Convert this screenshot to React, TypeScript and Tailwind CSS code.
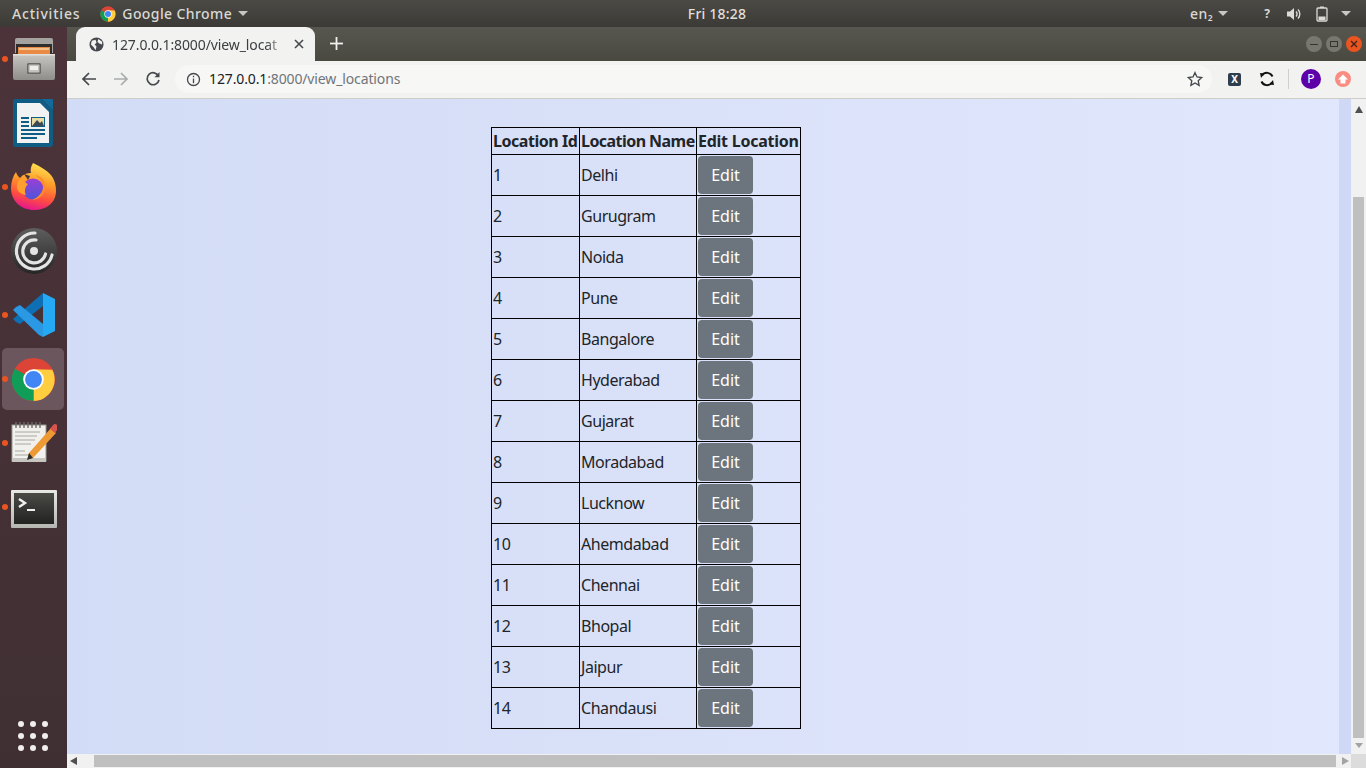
import React from "react";

const locations = [
  "Delhi",
  "Gurugram",
  "Noida",
  "Pune",
  "Bangalore",
  "Hyderabad",
  "Gujarat",
  "Moradabad",
  "Lucknow",
  "Ahemdabad",
  "Chennai",
  "Bhopal",
  "Jaipur",
  "Chandausi",
];

function ChromeLogo({ size }: { size: number }) {
  return (
    <svg width={size} height={size} viewBox="0 0 48 48">
      <circle cx="24" cy="24" r="23" fill="#DB4437" />
      <path d="M24 24 L44 13.5 A23 23 0 0 1 24 47 Z" fill="#FFCD40" />
      <path d="M24 24 L24 47 A23 23 0 0 1 4 12.5 Z" fill="#0F9D58" />
      <path d="M4 12.5 L14 29.5 L24 24 Z" fill="#0F9D58" />
      <path d="M24 13 L44 13.5 L33.5 30 L24 24 Z" fill="#FFCD40" />
      <circle cx="24" cy="24" r="11" fill="#fff" />
      <circle cx="24" cy="24" r="9" fill="#4285F4" />
    </svg>
  );
}

function FilesIcon() {
  return (
    <svg width="44" height="44" viewBox="0 0 44 44">
      <defs>
        <linearGradient id="drawer" x1="0" y1="0" x2="0" y2="1">
          <stop offset="0" stopColor="#c9c7c4" />
          <stop offset="1" stopColor="#8f8d8a" />
        </linearGradient>
      </defs>
      <path d="M3 3 a2 2 0 0 1 2 -2 H39 a2 2 0 0 1 2 2 V16 H3 Z" fill="#a5a3a0" />
      <rect x="4" y="7" width="36" height="12" fill="#2f2e2c" />
      <rect x="6" y="10" width="32" height="8" fill="#e98a45" />
      <rect x="7" y="11" width="30" height="2" fill="#f4c08c" />
      <path d="M1 17 H43 V41 a2 2 0 0 1 -2 2 H3 a2 2 0 0 1 -2 -2 Z" fill="url(#drawer)" />
      <rect x="1" y="17" width="42" height="1.5" fill="#e2e0dd" />
      <rect x="15" y="26" width="14" height="11" rx="1.5" fill="#6b6966" />
      <rect x="16.5" y="27.5" width="11" height="8" rx="1" fill="#c4c2bf" />
      <rect x="18" y="29" width="8" height="4" fill="#efeeec" />
    </svg>
  );
}

function WriterIcon() {
  return (
    <svg width="42" height="48" viewBox="0 0 42 48">
      <path d="M2 0 H29 L40 11 V45 a3 3 0 0 1 -3 3 H3 a3 3 0 0 1 -3 -3 V2 a2 2 0 0 1 2 -2 Z" fill="#0f5c85" />
      <path d="M4 4 H27 L36 13 V44 H4 Z" fill="#f1f3f3" />
      <path d="M29 0 H39 a1 1 0 0 1 1 1 V11 Z" fill="#106a9a" />
      <rect x="8" y="18" width="8" height="2" fill="#0f5c85" />
      <rect x="8" y="22" width="8" height="2" fill="#0f5c85" />
      <rect x="8" y="26" width="8" height="2" fill="#0f5c85" />
      <rect x="8" y="30" width="24" height="2" fill="#0f5c85" />
      <rect x="8" y="34" width="24" height="2" fill="#0f5c85" />
      <rect x="8" y="38" width="16" height="2" fill="#0f5c85" />
      <rect x="18" y="18" width="14" height="10" fill="#0f5c85" />
      <rect x="19" y="19" width="12" height="8" fill="#e9dca0" />
      <path d="M19 27 L24 21 L27 24 L29 22 L31 27 Z" fill="#3e4a52" />
    </svg>
  );
}

function FirefoxIcon() {
  return (
    <svg className="mt-[-2px]" width="46" height="47" viewBox="0 0 46 47">
      <defs>
        <linearGradient id="ffa" x1="0.65" y1="0" x2="0.4" y2="1">
          <stop offset="0" stopColor="#ffe552" />
          <stop offset="0.4" stopColor="#ff9a2a" />
          <stop offset="0.72" stopColor="#ff4f3f" />
          <stop offset="1" stopColor="#e5158f" />
        </linearGradient>
        <linearGradient id="ffb" x1="0.5" y1="0" x2="0.5" y2="1">
          <stop offset="0" stopColor="#9b3fd6" />
          <stop offset="1" stopColor="#4d55d8" />
        </linearGradient>
      </defs>
      <path
        d="M22 0 C30 4 38 8 42 15 C45 21 45 26 45 28 C45 40 35 47 23 47 C10 47 0 38 0 25 C0 19 2 13 5 9 C6 12 7 13 9 15 C12 11 17 10 20 10 C19 7 20 3 22 0 Z"
        fill="url(#ffa)"
      />
      <circle cx="22" cy="26" r="10.5" fill="url(#ffb)" />
      <path d="M13 11 L19 13 L17 17 Z" fill="#47323a" />
      <path d="M6 24 C6 17 11 14 16 15 C13 18 14 20 17 21 C14 24 13 28 15 32 C9 31 6 28 6 24 Z" fill="#ffa02e" />
      <path d="M24 12 C31 13 35 19 34 26 C33 33 27 37 21 37 C28 34 32 29 32 24 C32 19 29 15 24 12 Z" fill="#ff8a2c" />
    </svg>
  );
}

function DiscIcon() {
  return (
    <svg width="46" height="46" viewBox="0 0 46 46">
      <defs>
        <linearGradient id="dsc" x1="0" y1="0" x2="0" y2="1">
          <stop offset="0" stopColor="#5e5e5e" />
          <stop offset="1" stopColor="#262626" />
        </linearGradient>
      </defs>
      <circle cx="23" cy="23" r="23" fill="url(#dsc)" />
      <g fill="none" stroke="#e4e4e4" strokeLinecap="round">
        <path d="M24 5 A18 18 0 1 0 41 27" strokeWidth="3.2" />
        <path d="M25 12 A11.5 11.5 0 1 0 34.5 26" strokeWidth="3.2" />
      </g>
      <circle cx="23" cy="23" r="4" fill="#e4e4e4" />
    </svg>
  );
}

function VsCodeIcon() {
  return (
    <svg width="42" height="44" viewBox="0 0 42 44">
      <path d="M30 0 V13 L7 31 L3 29 L0 26 Z" fill="#0f6fb5" />
      <path d="M0 17 L3 14 L7 12 L30 31 V44 L26 42 Z" fill="#2a98e2" />
      <path d="M30 0 L42 6 V38 L30 44 Z" fill="#25a9f5" />
    </svg>
  );
}

function NotesIcon() {
  return (
    <svg width="46" height="42" viewBox="0 0 46 42">
      <rect x="1" y="3" width="34" height="36" fill="#f1f0ec" stroke="#9a9994" />
      <rect x="1" y="36" width="34" height="4" fill="#c6c5c0" />
      <g stroke="#6d6c68" strokeWidth="1.4">
        {[5, 9, 13, 17, 21, 25, 29].map((x) => (
          <line key={x} x1={x} y1="0" x2={x} y2="6" />
        ))}
      </g>
      <g stroke="#a8a7a2" strokeWidth="1">
        <line x1="4" y1="10" x2="29" y2="10" />
        <line x1="4" y1="14" x2="26" y2="14" />
        <line x1="4" y1="18" x2="24" y2="18" />
        <line x1="4" y1="22" x2="20" y2="22" />
        <line x1="4" y1="29" x2="14" y2="29" />
        <line x1="4" y1="33" x2="18" y2="33" />
      </g>
      <path d="M18 31 L40 6 L45 11 L22 36 L17 37 Z" fill="#ee9a34" />
      <path d="M39 7 L42 3 A3 3 0 0 1 46 8 L44 11 Z" fill="#d9534f" />
      <path d="M18 31 L22 36 L16 38 Z" fill="#2b2b2b" />
    </svg>
  );
}

function TerminalIcon() {
  return (
    <svg className="mt-[3px]" width="46" height="38" viewBox="0 0 46 38">
      <defs>
        <linearGradient id="trm" x1="0" y1="0" x2="0" y2="1">
          <stop offset="0" stopColor="#4a4a47" />
          <stop offset="1" stopColor="#222220" />
        </linearGradient>
        <linearGradient id="trf" x1="0" y1="0" x2="0" y2="1">
          <stop offset="0" stopColor="#e8e8e5" />
          <stop offset="1" stopColor="#b5b5b2" />
        </linearGradient>
      </defs>
      <rect x="0" y="0" width="46" height="38" rx="1" fill="url(#trf)" />
      <rect x="3" y="3" width="40" height="31" fill="url(#trm)" />
      <path d="M8 9 L14 13 L8 17" fill="none" stroke="#f0f0f0" strokeWidth="2.4" />
      <rect x="16" y="19" width="8" height="2" fill="#f0f0f0" />
    </svg>
  );
}

function DockItem({ dot, active, children }: { dot?: boolean; active?: boolean; children: React.ReactNode }) {
  return (
    <div className="relative h-16 flex items-center justify-center">
      {active && <div className="absolute left-[2px] top-[1px] w-[62px] h-[62px] rounded-[5px] bg-[#6a565c]" />}
      {dot && <div className="absolute left-[2px] top-[29px] w-[6px] h-[6px] rounded-full bg-[#e95420]" />}
      <div className="relative">{children}</div>
    </div>
  );
}

function Triangle({ dir, color, wide }: { dir: "up" | "down" | "left" | "right"; color: string; wide?: boolean }) {
  const points = {
    up: "0,7 4,0 8,7",
    down: "0,1 8,1 4,6",
    left: "7,0 7,8 0,4",
    right: "0,0 7,4 0,8",
  }[dir];
  return (
    <svg width={wide ? 10 : 8} height="8" viewBox="0 0 8 8" preserveAspectRatio="none">
      <polygon points={points} fill={color} />
    </svg>
  );
}

function TopBar() {
  return (
    <div className="h-[27px] shrink-0 flex items-center bg-gradient-to-b from-[#4b4a45] to-[#3b3a36] text-[#d9d8d3] text-[14px] font-medium pl-[12px] pr-[15px]">
      <span className="tracking-[0.8px]">Activities</span>
      <div className="ml-[20px] flex items-center gap-[6px]">
        <ChromeLogo size={16} />
        <span className="tracking-[0.4px]">Google Chrome</span>
        <Triangle dir="down" color="#c8c7c2" wide />
      </div>
      <div className="flex-1 flex justify-center">
        <span className="tracking-[0.2px] text-[#e0dfda] ml-[-4px]">Fri 18:28</span>
      </div>
      <div className="flex items-center">
        <span className="tracking-[0.5px]">en₂</span>
        <span className="ml-[5px]">
          <Triangle dir="down" color="#c8c7c2" wide />
        </span>
        <span className="ml-[36px] text-[12px] font-bold">?</span>
        <svg className="ml-[16px]" width="16" height="16" viewBox="0 0 16 16" fill="none" stroke="#dcdbd6">
          <path d="M1 5.5 H4 L8 2 V14 L4 10.5 H1 Z" fill="#dcdbd6" stroke="none" />
          <path d="M10 5.5 a3.5 3.5 0 0 1 0 5" strokeWidth="1.4" />
          <path d="M12 3.5 a6.5 6.5 0 0 1 0 9" strokeWidth="1.4" />
        </svg>
        <svg className="ml-[14px]" width="12" height="16" viewBox="0 0 12 16" fill="none">
          <rect x="1" y="2" width="10" height="13" rx="1" stroke="#dcdbd6" strokeWidth="1.3" />
          <rect x="4" y="0.5" width="4" height="1.5" fill="#dcdbd6" />
          <rect x="2.5" y="10.5" width="7" height="3.5" fill="#dcdbd6" />
        </svg>
        <span className="ml-[13px]">
          <Triangle dir="down" color="#c8c7c2" wide />
        </span>
      </div>
    </div>
  );
}

function Dock() {
  return (
    <div className="w-[67px] shrink-0 flex flex-col justify-between bg-gradient-to-b from-[#4c333a] to-[#3f2f33]">
      <div>
        <DockItem dot>
          <FilesIcon />
        </DockItem>
        <DockItem>
          <WriterIcon />
        </DockItem>
        <DockItem dot>
          <FirefoxIcon />
        </DockItem>
        <DockItem>
          <DiscIcon />
        </DockItem>
        <DockItem dot>
          <VsCodeIcon />
        </DockItem>
        <DockItem dot active>
          <ChromeLogo size={45} />
        </DockItem>
        <DockItem dot>
          <NotesIcon />
        </DockItem>
        <DockItem dot>
          <TerminalIcon />
        </DockItem>
      </div>
      <div className="grid grid-cols-3 w-[30px] gap-[6px] ml-[18px] mb-[17px]">
        {[...Array(9)].map((_, i) => (
          <div key={i} className="w-[6px] h-[6px] rounded-full bg-[#f0eeee]" />
        ))}
      </div>
    </div>
  );
}

function TabStrip() {
  return (
    <div className="h-[34px] shrink-0 flex bg-gradient-to-b from-[#57574f] to-[#494941] pl-[9px]">
      <div className="w-[239px] h-[34px] rounded-t-[9px] bg-[#f2f2f0] flex items-center pl-[13px] pr-[11px] text-[14px] text-[#3c4043]">
        <svg width="15" height="15" viewBox="0 0 16 16">
          <circle cx="8" cy="8" r="7.5" fill="#45484c" />
          <path d="M3 4 L7 3 L8 6 L6 8 L8 10 L7 14 L5 11 L2 8 Z M10 2 L14 5 L14 8 L11 7 L9 5 Z" fill="#f2f2f0" />
        </svg>
        <div className="ml-[8px] w-[175px] overflow-hidden whitespace-nowrap tracking-[-0.1px] [mask-image:linear-gradient(to_right,black_88%,transparent)]">
          127.0.0.1:8000/view_locat
        </div>
        <svg className="ml-auto" width="10" height="10" viewBox="0 0 10 10" stroke="#45484c" strokeWidth="1.6">
          <line x1="1" y1="1" x2="9" y2="9" />
          <line x1="9" y1="1" x2="1" y2="9" />
        </svg>
      </div>
      <svg className="ml-[15px] mt-[10px]" width="13" height="13" viewBox="0 0 13 13" stroke="#f0f0ee" strokeWidth="1.8">
        <line x1="6.5" y1="0" x2="6.5" y2="13" />
        <line x1="0" y1="6.5" x2="13" y2="6.5" />
      </svg>
      <div className="ml-auto mr-[4px] mt-[9px] flex gap-[4px]">
        <div className="w-[16px] h-[16px] rounded-full bg-[#77776f] flex items-center justify-center">
          <div className="w-[8px] h-[1px] bg-[#33332f]" />
        </div>
        <div className="w-[16px] h-[16px] rounded-full bg-[#77776f] flex items-center justify-center">
          <div className="w-[8px] h-[6px] border border-[#33332f]" />
        </div>
        <div className="w-[16px] h-[16px] rounded-full bg-[#e95420] flex items-center justify-center">
          <svg width="8" height="8" viewBox="0 0 8 8" stroke="#3b2316" strokeWidth="1.3">
            <line x1="1" y1="1" x2="7" y2="7" />
            <line x1="7" y1="1" x2="1" y2="7" />
          </svg>
        </div>
      </div>
    </div>
  );
}

function Toolbar() {
  return (
    <div className="h-[38px] shrink-0 flex items-center bg-[#f2f2f0] border-b border-[#cfcdca] pb-[1px]">
      <svg className="ml-[14px]" width="16" height="16" viewBox="0 0 16 16" fill="none" stroke="#45484c" strokeWidth="1.7">
        <path d="M15 8 H2 M8 2 L2 8 L8 14" />
      </svg>
      <svg className="ml-[16px]" width="16" height="16" viewBox="0 0 16 16" fill="none" stroke="#a9abad" strokeWidth="1.7">
        <path d="M1 8 H14 M8 2 L14 8 L8 14" />
      </svg>
      <svg className="ml-[16px]" width="16" height="16" viewBox="0 0 16 16" fill="none" stroke="#45484c" strokeWidth="1.7">
        <path d="M13.5 5 A6 6 0 1 0 14 9" />
        <path d="M14.5 1 V6.2 H9.5 Z" fill="#45484c" stroke="none" />
      </svg>
      <div className="ml-[14px] w-[1037px] h-[28px] rounded-full bg-[#f7f7f6] flex items-center pl-[11px]">
        <svg width="15" height="15" viewBox="0 0 16 16" fill="none" stroke="#45484c" strokeWidth="1.4">
          <circle cx="8" cy="8" r="6.4" />
          <line x1="8" y1="7" x2="8" y2="12" />
          <line x1="8" y1="4" x2="8" y2="5.6" />
        </svg>
        <span className="ml-[8px] mb-[1px] text-[14px] text-[#70757a] whitespace-nowrap tracking-[-0.13px]">
          <span className="text-[#202124]">127.0.0.1</span>:8000/view_locations
        </span>
        <svg className="ml-auto mr-[9px]" width="16" height="16" viewBox="0 0 24 24" fill="none" stroke="#45484c" strokeWidth="2">
          <path d="M12 2.5 L15 9 L22 9.8 L16.8 14.5 L18.2 21.5 L12 18 L5.8 21.5 L7.2 14.5 L2 9.8 L9 9 Z" />
        </svg>
      </div>
      <div className="ml-[16px] w-[13px] h-[13px] rounded-[2px] bg-[#2f3e4e] flex items-center justify-center text-white text-[10px] font-bold leading-none">
        X
      </div>
      <svg className="ml-[18px]" width="16" height="16" viewBox="0 0 16 16" fill="none" stroke="#111" strokeWidth="2">
        <path d="M13.5 5.5 A6 6 0 0 0 3 4.5" />
        <path d="M2.5 10.5 A6 6 0 0 0 13 11.5" />
        <path d="M1 2 L5.5 2.5 L2 7 Z" fill="#111" stroke="none" />
        <path d="M15 14 L10.5 13.5 L14 9 Z" fill="#111" stroke="none" />
      </svg>
      <div className="ml-[13px] w-[1px] h-[20px] bg-[#cfcfcf]" />
      <div className="ml-[12px] w-[20px] h-[20px] rounded-full bg-[#5e00a8] flex items-center justify-center text-white text-[12px]">
        P
      </div>
      <div className="ml-[14px] w-[16px] h-[16px] rounded-full bg-[#fb8c82] flex items-center justify-center">
        <svg width="10" height="10" viewBox="0 0 10 10">
          <path d="M5 0.5 L10 5.5 H7.5 V9.5 H2.5 V5.5 H0 Z" fill="#fff" />
        </svg>
      </div>
    </div>
  );
}

function LocationsTable() {
  return (
    <table className="w-[309px] table-fixed border-collapse text-[16px] text-[#212529] leading-6 tracking-[-0.45px] ml-[424px] mt-[28px]">
      <thead>
        <tr>
          <th className="w-[88px] border border-black p-[1px] text-left font-bold whitespace-nowrap">Location Id</th>
          <th className="w-[117px] border border-black p-[1px] text-left font-bold whitespace-nowrap tracking-[-0.55px]">Location Name</th>
          <th className="w-[104px] border border-black p-[1px] text-left font-bold whitespace-nowrap tracking-[-0.25px]">Edit Location</th>
        </tr>
      </thead>
      <tbody>
        {locations.map((name, i) => (
          <tr key={name}>
            <td className="border border-black p-[1px]">{i + 1}</td>
            <td className="border border-black p-[1px]">{name}</td>
            <td className="border border-black p-[1px]">
              <button className="block w-[55px] h-[38px] rounded-[4px] bg-[#6c757d] text-white text-[16px] tracking-normal">Edit</button>
            </td>
          </tr>
        ))}
      </tbody>
    </table>
  );
}

export default function App() {
  return (
    <div className="h-screen w-screen overflow-hidden flex flex-col font-['Noto_Sans',sans-serif]">
      <TopBar />
      <div className="flex-1 flex min-h-0">
        <Dock />
        <div className="flex-1 min-w-0 flex flex-col">
          <TabStrip />
          <Toolbar />
          <div className="flex-1 min-h-0 flex">
            <div className="flex-1 min-w-0 bg-gradient-to-r from-[#d3dcf6] to-[#e1e7fc]">
              <LocationsTable />
            </div>
            <div className="w-[12px] bg-[#cfd9f5]" />
            <div className="w-[15px] bg-[#f1f1f1] flex flex-col items-center">
              <div className="h-[16px] mt-[3px] flex items-center justify-center">
                <Triangle dir="up" color="#505050" />
              </div>
              <div className="mt-[79px] w-[11px] flex-1 bg-[#bfbfbf]" />
              <div className="h-[16px] flex items-center justify-center">
                <Triangle dir="down" color="#a3a3a3" />
              </div>
            </div>
          </div>
          <div className="h-[14px] shrink-0 flex bg-[#f1f1f1]">
            <div className="w-[27px] flex items-center pl-[3px]">
              <Triangle dir="left" color="#505050" />
            </div>
            <div className="w-[1242px] my-[1px] bg-[#bfbfbf]" />
            <div className="flex-1 flex items-center pl-[6px]">
              <Triangle dir="right" color="#a3a3a3" />
            </div>
            <div className="w-[15px] bg-[#dcdcdc]" />
          </div>
        </div>
      </div>
    </div>
  );
}
